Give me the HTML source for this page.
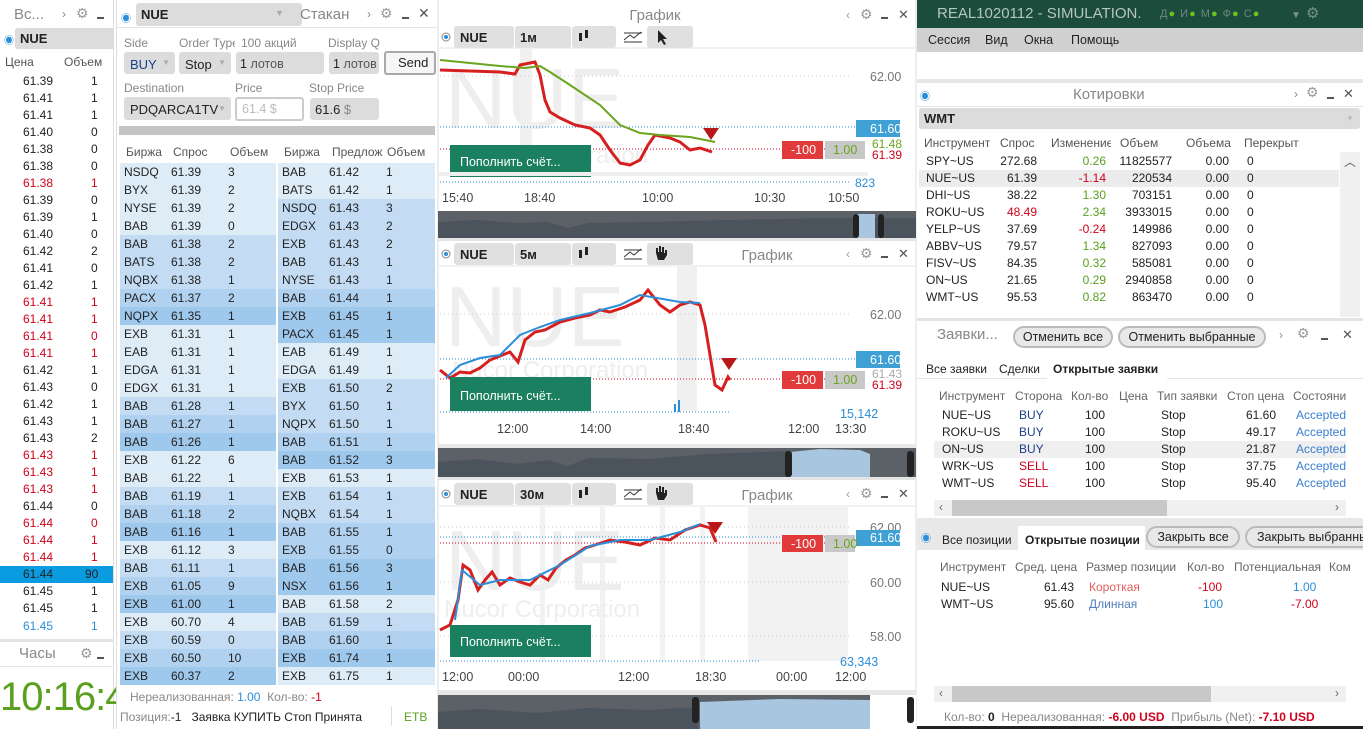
<!DOCTYPE html>
<html><head><meta charset="utf-8">
<style>
*{box-sizing:border-box;margin:0;padding:0}
body{width:1363px;height:729px;overflow:hidden;background:#fff;font-family:"Liberation Sans","Noto Sans CJK SC",sans-serif;font-size:12px;color:#222;position:relative}
.a{position:absolute;white-space:nowrap}
.g{color:#888}
.r{color:#d0021b}
.gr{color:#5aa01e}
.bl{color:#2a8ed8}
.dd{background:#dcdcdc;border-radius:3px}
.ts div{height:17.03px;line-height:17px;position:relative}
.ts span{position:absolute}
.bk div{height:18.03px;line-height:18px;position:relative;font-size:12px}
.bk span{position:absolute}
.q div{height:17px;line-height:17px;position:relative}
.q span{position:absolute}
.btn{position:absolute;border:2px solid #bbb;border-radius:12px;background:#e8e8e8;font-size:12.5px;text-align:center;line-height:18px;height:22px;white-space:nowrap;overflow:hidden}
</style></head><body>

<!-- LEFT: time & sales -->
<div class="a" style="left:0;top:0;width:114px;height:729px;background:#fff;border-right:1px solid #ddd"></div>
<div class="a g" style="left:14px;top:6px;font-size:15px">Вс...</div>
<div class="a g" style="left:62px;top:7px;font-size:12px">›</div>
<div class="a" style="left:76px;top:5px;font-size:14px;color:#999">⚙</div>
<div class="a" style="left:97px;top:17px;width:7px;height:2px;background:#555"></div>
<div class="a" style="left:4px;top:32px;font-size:10px;color:#2a8ed8">◉</div>
<div class="a dd" style="left:15px;top:28px;width:99px;height:21px;border-radius:3px 0 0 3px"></div>
<div class="a" style="left:20px;top:31px;font-size:13px;font-weight:bold">NUE</div>
<div class="a g" style="left:5px;top:55px;color:#555">Цена</div>
<div class="a g" style="left:64px;top:55px;color:#555">Объем</div>
<div class="a ts" style="left:0;top:73px;width:112px">
<div><span style="left:23px">61.39</span><span style="left:91px">1</span></div>
<div><span style="left:23px">61.41</span><span style="left:91px">1</span></div>
<div><span style="left:23px">61.41</span><span style="left:91px">1</span></div>
<div><span style="left:23px">61.40</span><span style="left:91px">0</span></div>
<div><span style="left:23px">61.38</span><span style="left:91px">0</span></div>
<div><span style="left:23px">61.38</span><span style="left:91px">0</span></div>
<div class="r"><span style="left:23px">61.38</span><span style="left:91px">1</span></div>
<div><span style="left:23px">61.39</span><span style="left:91px">0</span></div>
<div><span style="left:23px">61.39</span><span style="left:91px">1</span></div>
<div><span style="left:23px">61.40</span><span style="left:91px">0</span></div>
<div><span style="left:23px">61.42</span><span style="left:91px">2</span></div>
<div><span style="left:23px">61.41</span><span style="left:91px">0</span></div>
<div><span style="left:23px">61.42</span><span style="left:91px">1</span></div>
<div class="r"><span style="left:23px">61.41</span><span style="left:91px">1</span></div>
<div class="r"><span style="left:23px">61.41</span><span style="left:91px">1</span></div>
<div class="r"><span style="left:23px">61.41</span><span style="left:91px">0</span></div>
<div class="r"><span style="left:23px">61.41</span><span style="left:91px">1</span></div>
<div><span style="left:23px">61.42</span><span style="left:91px">1</span></div>
<div><span style="left:23px">61.43</span><span style="left:91px">0</span></div>
<div><span style="left:23px">61.42</span><span style="left:91px">1</span></div>
<div><span style="left:23px">61.43</span><span style="left:91px">1</span></div>
<div><span style="left:23px">61.43</span><span style="left:91px">2</span></div>
<div class="r"><span style="left:23px">61.43</span><span style="left:91px">1</span></div>
<div class="r"><span style="left:23px">61.43</span><span style="left:91px">1</span></div>
<div class="r"><span style="left:23px">61.43</span><span style="left:91px">1</span></div>
<div><span style="left:23px">61.44</span><span style="left:91px">0</span></div>
<div class="r"><span style="left:23px">61.44</span><span style="left:91px">0</span></div>
<div class="r"><span style="left:23px">61.44</span><span style="left:91px">1</span></div>
<div class="r"><span style="left:23px">61.44</span><span style="left:91px">1</span></div>
<div style="background:#0a9be0;width:113px"><span style="left:23px">61.44</span><span style="left:85px">90</span></div>
<div><span style="left:23px">61.45</span><span style="left:91px">1</span></div>
<div><span style="left:23px">61.45</span><span style="left:91px">1</span></div>
<div class="bl"><span style="left:23px">61.45</span><span style="left:91px">1</span></div>
</div>
<div class="a" style="left:0;top:639px;width:114px;height:3px;background:#e4e4e4"></div>
<div class="a g" style="left:19px;top:645px;font-size:15px">Часы</div>
<div class="a" style="left:80px;top:645px;font-size:14px;color:#999">⚙</div>
<div class="a" style="left:97px;top:657px;width:7px;height:2px;background:#555"></div>
<div class="a" style="left:0;top:666px;width:114px;height:1px;background:#e4e4e4"></div>
<div class="a" style="left:0;top:675px;font-size:40px;color:#5aa01e;letter-spacing:-1px">10:16:41</div>

<!-- ORDER BOOK -->
<div class="a" style="left:116px;top:0;width:321px;height:729px;background:#fff;border-left:1px solid #ddd;overflow:hidden">
<div class="a" style="left:4px;top:10px;font-size:10px;color:#2a8ed8">◉</div>
<div class="a dd" style="left:19px;top:3px;width:166px;height:23px"></div>
<div class="a" style="left:24px;top:7px;font-size:13px;font-weight:bold">NUE</div>
<div class="a" style="left:158px;top:8px;color:#aaa;font-size:9px">▼</div>
<div class="a g" style="left:183px;top:6px;font-size:15px">Стакан</div>
<div class="a g" style="left:250px;top:7px">›</div>
<div class="a" style="left:263px;top:5px;font-size:14px;color:#999">⚙</div>
<div class="a" style="left:285px;top:17px;width:7px;height:2px;background:#555"></div>
<div class="a" style="left:301px;top:5px;font-size:14px;color:#555">✕</div>
<div class="a" style="left:0;top:27px;width:321px;height:1px;background:#e4e4e4"></div>
<div class="a g" style="left:7px;top:36px">Side</div>
<div class="a g" style="left:62px;top:36px;width:56px;overflow:hidden">Order Type</div>
<div class="a g" style="left:124px;top:36px">100 акций</div>
<div class="a g" style="left:211px;top:36px;width:52px;overflow:hidden">Display Qty</div>
<div class="a dd" style="left:7px;top:52px;width:51px;height:22px"></div>
<div class="a" style="left:13px;top:57px;font-size:13px;color:#1a3f8a">BUY</div>
<div class="a" style="left:45px;top:58px;color:#aaa;font-size:8px">▼</div>
<div class="a dd" style="left:62px;top:52px;width:52px;height:22px"></div>
<div class="a" style="left:68px;top:57px;font-size:13px">Stop</div>
<div class="a" style="left:101px;top:58px;color:#aaa;font-size:8px">▼</div>
<div class="a dd" style="left:119px;top:52px;width:88px;height:22px"></div>
<div class="a" style="left:123px;top:57px;font-size:12.5px">1 <span style="color:#555">лотов</span></div>
<div class="a dd" style="left:212px;top:52px;width:50px;height:22px"></div>
<div class="a" style="left:216px;top:57px;font-size:12.5px">1 <span style="color:#555">лотов</span></div>
<div class="a" style="left:267px;top:51px;width:52px;height:24px;border:2px solid #aaa;border-radius:3px;background:#f6f6f6;font-size:13px;line-height:20px;padding-left:12px;overflow:hidden">Send</div>
<div class="a g" style="left:7px;top:81px">Destination</div>
<div class="a g" style="left:118px;top:81px">Price</div>
<div class="a g" style="left:192px;top:81px">Stop Price</div>
<div class="a dd" style="left:7px;top:97px;width:107px;height:23px"></div>
<div class="a" style="left:13px;top:102px;font-size:13px">PDQARCA1TV</div>
<div class="a" style="left:101px;top:104px;color:#aaa;font-size:8px">▼</div>
<div class="a" style="left:118px;top:97px;width:69px;height:24px;border:2px solid #ccc;border-radius:3px;padding:3px 0 0 5px;color:#bbb;font-size:12.5px">61.4 $</div>
<div class="a dd" style="left:193px;top:98px;width:69px;height:22px"></div>
<div class="a" style="left:198px;top:102px;font-size:13px">61.6 <span style="color:#888">$</span></div>
<div class="a" style="left:2px;top:126px;width:316px;height:9px;background:#c4c4c4"></div>
<div class="a g" style="left:9px;top:145px;color:#555">Биржа</div>
<div class="a g" style="left:56px;top:145px;color:#555">Спрос</div>
<div class="a g" style="left:113px;top:145px;color:#555">Объем</div>
<div class="a g" style="left:167px;top:145px;color:#555">Биржа</div>
<div class="a g" style="left:215px;top:145px;color:#555">Предлож</div>
<div class="a g" style="left:270px;top:145px;color:#555">Объем</div>
<div class="a bk" style="left:3px;top:163px;width:156px">
<div style="background:#deecf8"><span style="left:4px">NSDQ</span><span style="left:51px">61.39</span><span style="left:108px">3</span></div>
<div style="background:#deecf8"><span style="left:4px">BYX</span><span style="left:51px">61.39</span><span style="left:108px">2</span></div>
<div style="background:#deecf8"><span style="left:4px">NYSE</span><span style="left:51px">61.39</span><span style="left:108px">2</span></div>
<div style="background:#deecf8"><span style="left:4px">BAB</span><span style="left:51px">61.39</span><span style="left:108px">0</span></div>
<div style="background:#c3dcf3"><span style="left:4px">BAB</span><span style="left:51px">61.38</span><span style="left:108px">2</span></div>
<div style="background:#c3dcf3"><span style="left:4px">BATS</span><span style="left:51px">61.38</span><span style="left:108px">2</span></div>
<div style="background:#c3dcf3"><span style="left:4px">NQBX</span><span style="left:51px">61.38</span><span style="left:108px">1</span></div>
<div style="background:#b0d1f0"><span style="left:4px">PACX</span><span style="left:51px">61.37</span><span style="left:108px">2</span></div>
<div style="background:#9fc8ed"><span style="left:4px">NQPX</span><span style="left:51px">61.35</span><span style="left:108px">1</span></div>
<div style="background:#deecf8"><span style="left:4px">EXB</span><span style="left:51px">61.31</span><span style="left:108px">1</span></div>
<div style="background:#deecf8"><span style="left:4px">EAB</span><span style="left:51px">61.31</span><span style="left:108px">1</span></div>
<div style="background:#deecf8"><span style="left:4px">EDGA</span><span style="left:51px">61.31</span><span style="left:108px">1</span></div>
<div style="background:#deecf8"><span style="left:4px">EDGX</span><span style="left:51px">61.31</span><span style="left:108px">1</span></div>
<div style="background:#c3dcf3"><span style="left:4px">BAB</span><span style="left:51px">61.28</span><span style="left:108px">1</span></div>
<div style="background:#b0d1f0"><span style="left:4px">BAB</span><span style="left:51px">61.27</span><span style="left:108px">1</span></div>
<div style="background:#9fc8ed"><span style="left:4px">BAB</span><span style="left:51px">61.26</span><span style="left:108px">1</span></div>
<div style="background:#deecf8"><span style="left:4px">EXB</span><span style="left:51px">61.22</span><span style="left:108px">6</span></div>
<div style="background:#deecf8"><span style="left:4px">BAB</span><span style="left:51px">61.22</span><span style="left:108px">1</span></div>
<div style="background:#c3dcf3"><span style="left:4px">BAB</span><span style="left:51px">61.19</span><span style="left:108px">1</span></div>
<div style="background:#b0d1f0"><span style="left:4px">BAB</span><span style="left:51px">61.18</span><span style="left:108px">2</span></div>
<div style="background:#9fc8ed"><span style="left:4px">BAB</span><span style="left:51px">61.16</span><span style="left:108px">1</span></div>
<div style="background:#deecf8"><span style="left:4px">EXB</span><span style="left:51px">61.12</span><span style="left:108px">3</span></div>
<div style="background:#c3dcf3"><span style="left:4px">BAB</span><span style="left:51px">61.11</span><span style="left:108px">1</span></div>
<div style="background:#b0d1f0"><span style="left:4px">EXB</span><span style="left:51px">61.05</span><span style="left:108px">9</span></div>
<div style="background:#9fc8ed"><span style="left:4px">EXB</span><span style="left:51px">61.00</span><span style="left:108px">1</span></div>
<div style="background:#deecf8"><span style="left:4px">EXB</span><span style="left:51px">60.70</span><span style="left:108px">4</span></div>
<div style="background:#c3dcf3"><span style="left:4px">EXB</span><span style="left:51px">60.59</span><span style="left:108px">0</span></div>
<div style="background:#b0d1f0"><span style="left:4px">EXB</span><span style="left:51px">60.50</span><span style="left:108px">10</span></div>
<div style="background:#9fc8ed"><span style="left:4px">EXB</span><span style="left:51px">60.37</span><span style="left:108px">2</span></div>
</div>
<div class="a bk" style="left:161px;top:163px;width:157px">
<div style="background:#deecf8"><span style="left:4px">BAB</span><span style="left:51px">61.42</span><span style="left:108px">1</span></div>
<div style="background:#deecf8"><span style="left:4px">BATS</span><span style="left:51px">61.42</span><span style="left:108px">1</span></div>
<div style="background:#c3dcf3"><span style="left:4px">NSDQ</span><span style="left:51px">61.43</span><span style="left:108px">3</span></div>
<div style="background:#c3dcf3"><span style="left:4px">EDGX</span><span style="left:51px">61.43</span><span style="left:108px">2</span></div>
<div style="background:#c3dcf3"><span style="left:4px">EXB</span><span style="left:51px">61.43</span><span style="left:108px">2</span></div>
<div style="background:#c3dcf3"><span style="left:4px">BAB</span><span style="left:51px">61.43</span><span style="left:108px">1</span></div>
<div style="background:#c3dcf3"><span style="left:4px">NYSE</span><span style="left:51px">61.43</span><span style="left:108px">1</span></div>
<div style="background:#b0d1f0"><span style="left:4px">BAB</span><span style="left:51px">61.44</span><span style="left:108px">1</span></div>
<div style="background:#9fc8ed"><span style="left:4px">EXB</span><span style="left:51px">61.45</span><span style="left:108px">1</span></div>
<div style="background:#9fc8ed"><span style="left:4px">PACX</span><span style="left:51px">61.45</span><span style="left:108px">1</span></div>
<div style="background:#deecf8"><span style="left:4px">EAB</span><span style="left:51px">61.49</span><span style="left:108px">1</span></div>
<div style="background:#deecf8"><span style="left:4px">EDGA</span><span style="left:51px">61.49</span><span style="left:108px">1</span></div>
<div style="background:#c3dcf3"><span style="left:4px">EXB</span><span style="left:51px">61.50</span><span style="left:108px">2</span></div>
<div style="background:#c3dcf3"><span style="left:4px">BYX</span><span style="left:51px">61.50</span><span style="left:108px">1</span></div>
<div style="background:#c3dcf3"><span style="left:4px">NQPX</span><span style="left:51px">61.50</span><span style="left:108px">1</span></div>
<div style="background:#b0d1f0"><span style="left:4px">BAB</span><span style="left:51px">61.51</span><span style="left:108px">1</span></div>
<div style="background:#9fc8ed"><span style="left:4px">BAB</span><span style="left:51px">61.52</span><span style="left:108px">3</span></div>
<div style="background:#deecf8"><span style="left:4px">EXB</span><span style="left:51px">61.53</span><span style="left:108px">1</span></div>
<div style="background:#c3dcf3"><span style="left:4px">EXB</span><span style="left:51px">61.54</span><span style="left:108px">1</span></div>
<div style="background:#c3dcf3"><span style="left:4px">NQBX</span><span style="left:51px">61.54</span><span style="left:108px">1</span></div>
<div style="background:#b0d1f0"><span style="left:4px">BAB</span><span style="left:51px">61.55</span><span style="left:108px">1</span></div>
<div style="background:#b0d1f0"><span style="left:4px">EXB</span><span style="left:51px">61.55</span><span style="left:108px">0</span></div>
<div style="background:#9fc8ed"><span style="left:4px">BAB</span><span style="left:51px">61.56</span><span style="left:108px">3</span></div>
<div style="background:#9fc8ed"><span style="left:4px">NSX</span><span style="left:51px">61.56</span><span style="left:108px">1</span></div>
<div style="background:#deecf8"><span style="left:4px">BAB</span><span style="left:51px">61.58</span><span style="left:108px">2</span></div>
<div style="background:#c3dcf3"><span style="left:4px">BAB</span><span style="left:51px">61.59</span><span style="left:108px">1</span></div>
<div style="background:#b0d1f0"><span style="left:4px">BAB</span><span style="left:51px">61.60</span><span style="left:108px">1</span></div>
<div style="background:#9fc8ed"><span style="left:4px">EXB</span><span style="left:51px">61.74</span><span style="left:108px">1</span></div>
<div style="background:#deecf8"><span style="left:4px">EXB</span><span style="left:51px">61.75</span><span style="left:108px">1</span></div>
</div>
<div class="a g" style="left:13px;top:690px">Нереализованная: <span style="color:#2a8ed8">1.00</span> &nbsp;Кол-во: <span class="r">-1</span></div>
<div class="a" style="left:3px;top:710px"><span class="g">Позиция:</span>-1 &nbsp; Заявка КУПИТЬ Стоп Принята</div>
<div class="a" style="left:274px;top:706px;width:1px;height:20px;background:#ddd"></div>
<div class="a" style="left:287px;top:710px;color:#5aa01e">ETB</div>
</div>

<!-- CHARTS -->
<svg class="a" style="left:437px;top:0" width="480" height="729" viewBox="437 0 480 729" font-family="Liberation Sans, sans-serif">
<rect x="437" y="0" width="480" height="729" fill="#fff"/>
<line x1="438" y1="0" x2="438" y2="729" stroke="#ddd"/>
<line x1="916" y1="0" x2="916" y2="729" stroke="#ddd"/>
<text x="655" y="20" font-size="15" fill="#888" text-anchor="middle">График</text>
<text x="846" y="19" font-size="12" fill="#999">‹</text><text x="860" y="19" font-size="14" fill="#999">⚙</text>
<rect x="881" y="17" width="7" height="2" fill="#555"/><text x="898" y="19" font-size="13" fill="#555">✕</text>
<g>
<circle cx="446" cy="37" r="4" fill="none" stroke="#888"/><circle cx="446" cy="37" r="2" fill="#2a8ed8"/>
<rect x="454" y="26" width="60" height="22" rx="3" fill="#e0e0e0"/><rect x="515" y="26" width="56" height="22" rx="3" fill="#e0e0e0"/><rect x="572" y="26" width="44" height="22" rx="3" fill="#e0e0e0"/><rect x="647" y="26" width="46" height="22" rx="3" fill="#e0e0e0"/>
<text x="460" y="42" font-size="13" font-weight="bold" fill="#222">NUE</text><text x="520" y="42" font-size="13" font-weight="bold" fill="#222">1м</text>
<rect x="579" y="33" width="3" height="8" fill="#222"/><rect x="585" y="30" width="3" height="8" fill="#222"/>
<path d="M624 33h18M624 42h18M624 40l6-5 4 3 7-6" stroke="#333" fill="none" stroke-width="1"/>
<path d="M658 30l0 13 3-3 3 5 2-1-3-5 4 0z" fill="#222"/>
</g>
<line x1="438" y1="48" x2="916" y2="48" stroke="#e4e4e4"/>
<text x="445" y="128" font-size="85" fill="#eeeeee">NUE</text>
<text x="452" y="163" font-size="24" fill="#eeeeee">Nucor Corporation</text>
<rect x="520" y="48" width="12" height="130" fill="#f0f0f0"/>
<line x1="440" y1="76" x2="850" y2="76" stroke="#ccc" stroke-dasharray="1,3"/>
<text x="870" y="81" font-size="12.5" fill="#777">62.00</text>
<line x1="440" y1="127" x2="860" y2="127" stroke="#2a8ed8" stroke-dasharray="1,2"/>
<line x1="440" y1="149" x2="860" y2="149" stroke="#d0021b" stroke-dasharray="1,2"/>
<polyline points="440,70 470,71 500,72 515,74 520,65 535,62 540,75 545,100 550,112 560,118 575,125 590,128 600,135 610,150 620,163 630,165 640,160 648,145 655,135 670,138 680,142 690,150 700,148 712,152" fill="none" stroke="#d62020" stroke-width="3"/>
<polyline points="440,60 470,63 500,66 525,68 540,66 550,72 570,85 600,105 620,125 640,133 660,135 690,137 715,142" fill="none" stroke="#6aa51e" stroke-width="2"/>
<path d="M703 128h16l-8 12z" fill="#b81818"/>
<rect x="856" y="120" width="44" height="17" fill="#3fa0d6"/><text x="870" y="133" font-size="12.5" fill="#fff">61.60</text>
<rect x="782" y="141" width="41" height="18" fill="#e03a3a"/><text x="791" y="154" font-size="12.5" fill="#fff">-100</text>
<rect x="825" y="141" width="40" height="18" fill="#c8c8c8"/><text x="833" y="154" font-size="12.5" fill="#6aa51e">1.00</text>
<text x="872" y="148" font-size="12" fill="#6aa51e">61.48</text><text x="872" y="159" font-size="12" fill="#d0021b">61.39</text>
<rect x="450" y="145" width="141" height="32" fill="#1a8060"/><text x="460" y="166" font-size="12.5" fill="#fff">Пополнить счёт...</text>
<rect x="438" y="172" width="430" height="4" fill="#eee"/>
<line x1="440" y1="182" x2="850" y2="182" stroke="#2a8ed8" stroke-dasharray="1,2"/>
<text x="855" y="187" font-size="12" fill="#2a8ed8">823</text>
<g font-size="12.5" fill="#444"><text x="442" y="202">15:40</text><text x="524" y="202">18:40</text><text x="642" y="202">10:00</text><text x="754" y="202">10:30</text><text x="828" y="202">10:50</text></g>
<rect x="438" y="211" width="478" height="27" fill="#5c6168"/>
<path d="M438 238V222l40-2 40 3 30-1 20 6 20-5 60-1 80-2 100-2 88 0V238z" fill="#4b535c"/>
<rect x="855" y="214" width="20" height="24" fill="#a8c6e0"/>
<rect x="853" y="214" width="6" height="24" rx="3" fill="#222"/><rect x="878" y="214" width="6" height="24" rx="3" fill="#222"/>
<rect x="438" y="238" width="478" height="3" fill="#e4e4e4"/>
<g>
<circle cx="446" cy="254" r="4" fill="none" stroke="#888"/><circle cx="446" cy="254" r="2" fill="#2a8ed8"/>
<rect x="454" y="243" width="60" height="22" rx="3" fill="#e0e0e0"/><rect x="515" y="243" width="56" height="22" rx="3" fill="#e0e0e0"/><rect x="572" y="243" width="44" height="22" rx="3" fill="#e0e0e0"/><rect x="647" y="243" width="46" height="22" rx="3" fill="#e0e0e0"/>
<text x="460" y="259" font-size="13" font-weight="bold" fill="#222">NUE</text><text x="520" y="259" font-size="13" font-weight="bold" fill="#222">5м</text>
<rect x="579" y="250" width="3" height="8" fill="#222"/><rect x="585" y="247" width="3" height="8" fill="#222"/>
<path d="M624 250h18M624 259h18M624 257l6-5 4 3 7-6" stroke="#333" fill="none"/>
<path d="M656 253v-5h2v4h1v-6h2v6h1v-5h2v6h1v-3h2v5l-3 5h-6z" fill="#222"/>
</g>
<text x="767" y="260" font-size="15" fill="#888" text-anchor="middle">График</text>
<text x="846" y="258" font-size="12" fill="#999">‹</text><text x="860" y="258" font-size="14" fill="#999">⚙</text>
<rect x="881" y="256" width="7" height="2" fill="#555"/><text x="898" y="258" font-size="13" fill="#555">✕</text>
<line x1="438" y1="266" x2="916" y2="266" stroke="#e4e4e4"/>
<text x="445" y="346" font-size="85" fill="#eeeeee">NUE</text>
<text x="452" y="378" font-size="24" fill="#eeeeee">Nucor Corporation</text>
<rect x="677" y="266" width="20" height="145" fill="#f0f0f0"/>
<line x1="440" y1="314" x2="850" y2="314" stroke="#ccc" stroke-dasharray="1,3"/>
<text x="870" y="319" font-size="12.5" fill="#777">62.00</text>
<line x1="440" y1="359" x2="860" y2="359" stroke="#2a8ed8" stroke-dasharray="1,2"/>
<line x1="440" y1="379" x2="860" y2="379" stroke="#d0021b" stroke-dasharray="1,2"/>
<polyline points="440,370 450,378 460,372 470,373 480,368 490,360 500,356 510,352 518,362 525,340 535,332 545,330 560,322 575,318 590,315 600,310 610,312 625,307 640,300 648,290 652,295 660,305 670,312 680,305 690,302 700,305 705,325 710,355 715,385 722,390 728,377 730,380" fill="none" stroke="#d62020" stroke-width="3"/>
<polyline points="446,378 460,365 480,358 500,355 520,335 540,327 560,320 590,313 620,305 640,295 680,302 700,303" fill="none" stroke="#2a8ed8" stroke-width="2"/>
<path d="M721 358h16l-8 12z" fill="#b81818"/>
<rect x="856" y="351" width="44" height="17" fill="#3fa0d6"/><text x="870" y="364" font-size="12.5" fill="#fff">61.60</text>
<rect x="782" y="371" width="41" height="18" fill="#e03a3a"/><text x="791" y="384" font-size="12.5" fill="#fff">-100</text>
<rect x="825" y="371" width="40" height="18" fill="#c8c8c8"/><text x="833" y="384" font-size="12.5" fill="#6aa51e">1.00</text>
<text x="872" y="378" font-size="12" fill="#aaa">61.43</text><text x="872" y="389" font-size="12" fill="#d0021b">61.39</text>
<rect x="450" y="377" width="141" height="34" fill="#1a8060"/><text x="460" y="400" font-size="12.5" fill="#fff">Пополнить счёт...</text>
<line x1="440" y1="412" x2="730" y2="412" stroke="#2a8ed8" stroke-dasharray="1,2"/>
<rect x="674" y="404" width="2" height="8" fill="#2a8ed8"/><rect x="678" y="400" width="2" height="12" fill="#2a8ed8"/>
<text x="840" y="418" font-size="12.5" fill="#2a8ed8">15,142</text>
<g font-size="12.5" fill="#444"><text x="497" y="433">12:00</text><text x="580" y="433">14:00</text><text x="678" y="433">18:40</text><text x="788" y="433">12:00</text><text x="835" y="433">13:30</text></g>
<rect x="438" y="444" width="478" height="33" fill="#e8e8e8"/>
<rect x="438" y="448" width="478" height="29" fill="#5c6168"/>
<path d="M438 477V462l40-3 40 5 30-4 20 6 20-8 60 1 60-5 80-3V477z" fill="#4b535c"/>
<path d="M790 477V452l30-3 40 1 10 4V477z" fill="#a8c6e0"/>
<rect x="785" y="451" width="7" height="26" rx="3" fill="#222"/><rect x="907" y="451" width="7" height="26" rx="3" fill="#222"/>
<rect x="438" y="477" width="478" height="3" fill="#e4e4e4"/>
<g>
<circle cx="446" cy="494" r="4" fill="none" stroke="#888"/><circle cx="446" cy="494" r="2" fill="#2a8ed8"/>
<rect x="454" y="483" width="60" height="22" rx="3" fill="#e0e0e0"/><rect x="515" y="483" width="56" height="22" rx="3" fill="#e0e0e0"/><rect x="572" y="483" width="44" height="22" rx="3" fill="#e0e0e0"/><rect x="647" y="483" width="46" height="22" rx="3" fill="#e0e0e0"/>
<text x="460" y="499" font-size="13" font-weight="bold" fill="#222">NUE</text><text x="520" y="499" font-size="13" font-weight="bold" fill="#222">30м</text>
<rect x="579" y="490" width="3" height="8" fill="#222"/><rect x="585" y="487" width="3" height="8" fill="#222"/>
<path d="M624 490h18M624 499h18M624 497l6-5 4 3 7-6" stroke="#333" fill="none"/>
<path d="M656 493v-5h2v4h1v-6h2v6h1v-5h2v6h1v-3h2v5l-3 5h-6z" fill="#222"/>
</g>
<text x="767" y="500" font-size="15" fill="#888" text-anchor="middle">График</text>
<text x="846" y="498" font-size="12" fill="#999">‹</text><text x="860" y="498" font-size="14" fill="#999">⚙</text>
<rect x="881" y="496" width="7" height="2" fill="#555"/><text x="898" y="498" font-size="13" fill="#555">✕</text>
<line x1="438" y1="506" x2="916" y2="506" stroke="#e4e4e4"/>
<rect x="748" y="506" width="100" height="155" fill="#f2f2f2"/>
<rect x="540" y="506" width="5" height="155" fill="#f2f2f2"/><rect x="600" y="506" width="5" height="155" fill="#f2f2f2"/><rect x="660" y="506" width="5" height="155" fill="#f2f2f2"/><rect x="700" y="506" width="5" height="155" fill="#f2f2f2"/>
<text x="445" y="590" font-size="85" fill="#eeeeee">NUE</text>
<text x="444" y="617" font-size="24" fill="#eeeeee">Nucor Corporation</text>
<line x1="440" y1="527" x2="850" y2="527" stroke="#ccc" stroke-dasharray="1,3"/>
<text x="870" y="532" font-size="12.5" fill="#777">62.00</text>
<line x1="440" y1="582" x2="850" y2="582" stroke="#ccc" stroke-dasharray="1,3"/>
<text x="870" y="587" font-size="12.5" fill="#777">60.00</text>
<line x1="440" y1="636" x2="850" y2="636" stroke="#ccc" stroke-dasharray="1,3"/>
<text x="870" y="641" font-size="12.5" fill="#777">58.00</text>
<line x1="440" y1="537" x2="860" y2="537" stroke="#2a8ed8" stroke-dasharray="1,2"/>
<line x1="440" y1="543" x2="860" y2="543" stroke="#d0021b" stroke-dasharray="1,2"/>
<polyline points="440,630 450,625 458,600 463,565 470,570 478,590 485,580 492,572 500,585 510,578 520,582 530,585 540,575 548,580 556,568 566,560 575,555 585,548 595,545 610,540 625,542 640,545 655,538 670,540 685,530 700,525 710,528 716,542" fill="none" stroke="#d62020" stroke-width="3"/>
<polyline points="455,620 462,570 480,585 500,580 530,580 560,565 590,546 620,540 650,540 680,532 700,524" fill="none" stroke="#2a8ed8" stroke-width="2"/>
<path d="M707 522h16l-8 12z" fill="#b81818"/>
<rect x="856" y="530" width="44" height="16" fill="#3fa0d6"/><text x="870" y="542" font-size="12.5" fill="#fff">61.60</text>
<rect x="782" y="535" width="41" height="17" fill="#e03a3a"/><text x="791" y="548" font-size="12.5" fill="#fff">-100</text>
<rect x="825" y="535" width="30" height="17" fill="#c8c8c8"/><text x="833" y="548" font-size="12.5" fill="#6aa51e">1.00</text>
<rect x="450" y="625" width="141" height="32" fill="#1a8060"/><text x="460" y="646" font-size="12.5" fill="#fff">Пополнить счёт...</text>
<line x1="440" y1="661" x2="760" y2="661" stroke="#2a8ed8" stroke-dasharray="1,2"/>
<text x="840" y="666" font-size="12.5" fill="#2a8ed8">63,343</text>
<g font-size="12.5" fill="#444"><text x="442" y="681">12:00</text><text x="508" y="681">00:00</text><text x="618" y="681">12:00</text><text x="695" y="681">18:30</text><text x="776" y="681">00:00</text><text x="835" y="681">12:00</text></g>
<rect x="438" y="690" width="478" height="39" fill="#e8e8e8"/>
<rect x="438" y="695" width="478" height="34" fill="#5c6168"/>
<path d="M438 729V712l40-3 60 4 50-5 60 2 50-3V729z" fill="#4b535c"/>
<path d="M700 729V702l80-3 90 1V729z" fill="#a8c6e0"/>
<rect x="870" y="695" width="46" height="34" fill="#fff"/>
<rect x="692" y="697" width="7" height="26" rx="3" fill="#222"/><rect x="907" y="697" width="7" height="26" rx="3" fill="#222"/>
</svg>

<!-- RIGHT -->
<div class="a" style="left:917px;top:0;width:446px;height:28px;background:#1b4c3c"></div>
<div class="a" style="left:937px;top:5px;font-size:15px;color:#b5c6bd;width:205px;overflow:hidden">REAL1020112 - SIMULATION...</div>
<div class="a" style="left:1160px;top:8px;font-size:11px;color:#6d8a7c;letter-spacing:1px">Д<span style="color:#6cc11c">●</span> И<span style="color:#6cc11c">●</span> М<span style="color:#6cc11c">●</span> Ф<span style="color:#6cc11c">●</span> С<span style="color:#6cc11c">●</span></div>
<div class="a" style="left:1291px;top:10px;font-size:10px;color:#7a9488">▼</div>
<div class="a" style="left:1306px;top:4px;font-size:15px;color:#7a9488">⚙</div>
<div class="a" style="left:917px;top:28px;width:446px;height:24px;background:#d0d0d0"></div>
<div class="a" style="left:928px;top:33px;font-size:12.5px">Сессия</div>
<div class="a" style="left:985px;top:33px;font-size:12.5px">Вид</div>
<div class="a" style="left:1024px;top:33px;font-size:12.5px">Окна</div>
<div class="a" style="left:1071px;top:33px;font-size:12.5px">Помощь</div>
<div class="a" style="left:917px;top:79px;width:446px;height:4px;background:#e6e6e6"></div>
<div class="a" style="left:920px;top:88px;font-size:10px;color:#2a8ed8">◉</div>
<div class="a g" style="left:1073px;top:86px;font-size:15px">Котировки</div>
<div class="a g" style="left:1294px;top:87px">›</div>
<div class="a" style="left:1306px;top:84px;font-size:14px;color:#999">⚙</div>
<div class="a" style="left:1327px;top:97px;width:7px;height:2px;background:#555"></div>
<div class="a" style="left:1343px;top:86px;font-size:13px;color:#555">✕</div>
<div class="a" style="left:917px;top:106px;width:446px;height:1px;background:#e4e4e4"></div>
<div class="a dd" style="left:919px;top:108px;width:441px;height:21px"></div>
<div class="a" style="left:924px;top:111px;font-size:13px;font-weight:bold">WMT</div>
<div class="a" style="left:1346px;top:114px;color:#bbb;font-size:8px">▼</div>
<div class="a" style="left:924px;top:136px;color:#555">Инструмент</div>
<div class="a" style="left:1000px;top:136px;color:#555">Спрос</div>
<div class="a" style="left:1051px;top:136px;color:#555;width:60px;overflow:hidden">Изменение</div>
<div class="a" style="left:1120px;top:136px;color:#555">Объем</div>
<div class="a" style="left:1186px;top:136px;color:#555">Объема</div>
<div class="a" style="left:1244px;top:136px;color:#555;width:60px;overflow:hidden">Перекрыт</div>
<div class="a q" style="left:919px;top:153px;width:420px">
<div><span style="left:7px">SPY~US</span><span style="right:302px">272.68</span><span class="gr" style="right:233px">0.26</span><span style="right:167px">11825577</span><span style="right:110px">0.00</span><span style="left:328px">0</span></div>
<div style="background:#ececec"><span style="left:7px">NUE~US</span><span style="right:302px">61.39</span><span class="r" style="right:233px">-1.14</span><span style="right:167px">220534</span><span style="right:110px">0.00</span><span style="left:328px">0</span></div>
<div><span style="left:7px">DHI~US</span><span style="right:302px">38.22</span><span class="gr" style="right:233px">1.30</span><span style="right:167px">703151</span><span style="right:110px">0.00</span><span style="left:328px">0</span></div>
<div><span style="left:7px">ROKU~US</span><span class="r" style="right:302px">48.49</span><span class="gr" style="right:233px">2.34</span><span style="right:167px">3933015</span><span style="right:110px">0.00</span><span style="left:328px">0</span></div>
<div><span style="left:7px">YELP~US</span><span style="right:302px">37.69</span><span class="r" style="right:233px">-0.24</span><span style="right:167px">149986</span><span style="right:110px">0.00</span><span style="left:328px">0</span></div>
<div><span style="left:7px">ABBV~US</span><span style="right:302px">79.57</span><span class="gr" style="right:233px">1.34</span><span style="right:167px">827093</span><span style="right:110px">0.00</span><span style="left:328px">0</span></div>
<div><span style="left:7px">FISV~US</span><span style="right:302px">84.35</span><span class="gr" style="right:233px">0.32</span><span style="right:167px">585081</span><span style="right:110px">0.00</span><span style="left:328px">0</span></div>
<div><span style="left:7px">ON~US</span><span style="right:302px">21.65</span><span class="gr" style="right:233px">0.29</span><span style="right:167px">2940858</span><span style="right:110px">0.00</span><span style="left:328px">0</span></div>
<div><span style="left:7px">WMT~US</span><span style="right:302px">95.53</span><span class="gr" style="right:233px">0.82</span><span style="right:167px">863470</span><span style="right:110px">0.00</span><span style="left:328px">0</span></div>
</div>
<div class="a" style="left:1340px;top:152px;width:20px;height:165px;background:#f0f0f0"></div>
<div class="a" style="left:1344px;top:153px;font-size:12px;color:#555">︿</div>
<div class="a" style="left:917px;top:318px;width:446px;height:3px;background:#e4e4e4"></div>
<div class="a g" style="left:937px;top:326px;font-size:15px">Заявки...</div>
<div class="btn" style="left:1013px;top:326px;width:100px">Отменить все</div>
<div class="btn" style="left:1118px;top:326px;width:148px">Отменить выбранные</div>
<div class="a g" style="left:1279px;top:328px">›</div>
<div class="a" style="left:1297px;top:325px;font-size:14px;color:#999">⚙</div>
<div class="a" style="left:1321px;top:338px;width:7px;height:2px;background:#555"></div>
<div class="a" style="left:1342px;top:327px;font-size:13px;color:#555">✕</div>
<div class="a" style="left:917px;top:378px;width:446px;height:1px;background:#e4e4e4"></div>
<div class="a" style="left:926px;top:362px">Все заявки</div>
<div class="a" style="left:999px;top:362px">Сделки</div>
<div class="a" style="left:1047px;top:355px;width:120px;height:24px;background:#fff"></div>
<div class="a" style="left:1053px;top:362px;font-weight:bold">Открытые заявки</div>
<div class="a" style="left:939px;top:389px;color:#666">Инструмент</div>
<div class="a" style="left:1015px;top:389px;color:#666">Сторона</div>
<div class="a" style="left:1071px;top:389px;color:#666">Кол-во</div>
<div class="a" style="left:1119px;top:389px;color:#666">Цена</div>
<div class="a" style="left:1157px;top:389px;color:#666">Тип заявки</div>
<div class="a" style="left:1227px;top:389px;color:#666">Стоп цена</div>
<div class="a" style="left:1293px;top:389px;color:#666">Состояни</div>
<div class="a q" style="left:934px;top:407px;width:412px">
<div><span style="left:8px">NUE~US</span><span style="left:85px;color:#1f3f8f">BUY</span><span style="left:151px">100</span><span style="left:227px">Stop</span><span style="left:312px">61.60</span><span style="left:362px;color:#3a7fd0">Accepted</span></div>
<div><span style="left:8px">ROKU~US</span><span style="left:85px;color:#1f3f8f">BUY</span><span style="left:151px">100</span><span style="left:227px">Stop</span><span style="left:312px">49.17</span><span style="left:362px;color:#3a7fd0">Accepted</span></div>
<div style="background:#efefef"><span style="left:8px">ON~US</span><span style="left:85px;color:#1f3f8f">BUY</span><span style="left:151px">100</span><span style="left:227px">Stop</span><span style="left:312px">21.87</span><span style="left:362px;color:#3a7fd0">Accepted</span></div>
<div><span style="left:8px">WRK~US</span><span class="r" style="left:85px">SELL</span><span style="left:151px">100</span><span style="left:227px">Stop</span><span style="left:312px">37.75</span><span style="left:362px;color:#3a7fd0">Accepted</span></div>
<div><span style="left:8px">WMT~US</span><span class="r" style="left:85px">SELL</span><span style="left:151px">100</span><span style="left:227px">Stop</span><span style="left:312px">95.40</span><span style="left:362px;color:#3a7fd0">Accepted</span></div>
</div>
<div class="a" style="left:934px;top:500px;width:412px;height:16px;background:#f0f0f0"></div>
<div class="a" style="left:952px;top:500px;width:215px;height:16px;background:#c8c8c8"></div>
<div class="a" style="left:939px;top:500px;color:#666">‹</div><div class="a" style="left:1335px;top:500px;color:#666">›</div>
<div class="a" style="left:917px;top:518px;width:446px;height:32px;background:#e8e8e8"></div>
<div class="a" style="left:921px;top:530px;font-size:10px;color:#2a8ed8">◉</div>
<div class="a" style="left:942px;top:533px">Все позиции</div>
<div class="a" style="left:1018px;top:526px;width:127px;height:24px;background:#fff"></div>
<div class="a" style="left:1025px;top:533px;font-weight:bold">Открытые позиции</div>
<div class="btn" style="left:1146px;top:526px;width:94px">Закрыть все</div>
<div class="btn" style="left:1245px;top:526px;width:130px;text-align:left;padding-left:10px">Закрыть выбранные</div>
<div class="a" style="left:940px;top:560px;color:#666">Инструмент</div>
<div class="a" style="left:1015px;top:560px;color:#666">Сред. цена</div>
<div class="a" style="left:1086px;top:560px;color:#666">Размер позиции</div>
<div class="a" style="left:1187px;top:560px;color:#666">Кол-во</div>
<div class="a" style="left:1234px;top:560px;color:#666">Потенциальная</div>
<div class="a" style="left:1329px;top:560px;color:#666">Ком</div>
<div class="a" style="left:941px;top:580px">NUE~US</div><div class="a" style="left:1044px;top:580px">61.43</div><div class="a" style="left:1089px;top:580px;color:#e06060">Короткая</div><div class="a r" style="left:1198px;top:580px">-100</div><div class="a" style="left:1293px;top:580px;color:#2a8ed8">1.00</div>
<div class="a" style="left:941px;top:597px">WMT~US</div><div class="a" style="left:1044px;top:597px">95.60</div><div class="a" style="left:1089px;top:597px;color:#5080c0">Длинная</div><div class="a" style="left:1203px;top:597px;color:#2a8ed8">100</div><div class="a r" style="left:1291px;top:597px">-7.00</div>
<div class="a" style="left:934px;top:686px;width:412px;height:16px;background:#f0f0f0"></div>
<div class="a" style="left:952px;top:686px;width:259px;height:16px;background:#c8c8c8"></div>
<div class="a" style="left:939px;top:686px;color:#666">‹</div><div class="a" style="left:1335px;top:686px;color:#666">›</div>
<div class="a" style="left:944px;top:710px"><span class="g">Кол-во:</span> <b>0</b> &nbsp;<span class="g">Нереализованная:</span> <b class="r">-6.00 USD</b> &nbsp;<span class="g">Прибыль (Net):</span> <b class="r">-7.10 USD</b></div>
<div class="a" style="left:917px;top:726px;width:446px;height:3px;background:#222"></div>
</body></html>
